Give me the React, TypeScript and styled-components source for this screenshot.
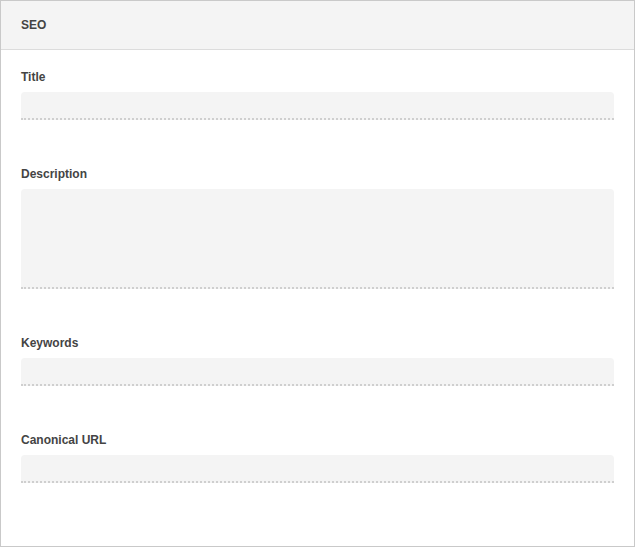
import React from 'react';
import styled, { createGlobalStyle } from 'styled-components';

const GlobalStyle = createGlobalStyle`
  html, body {
    margin: 0;
    padding: 0;
    background: #fff;
  }
  body {
    font-family: "Liberation Sans", Arial, Helvetica, sans-serif;
  }
`;

const Panel = styled.section`
  width: 635px;
  height: 547px;
  box-sizing: border-box;
  border: 1px solid #c9c9c9;
  background: #fff;
  display: flex;
  flex-direction: column;
`;

const PanelHeader = styled.header`
  height: 48px;
  line-height: 48px;
  padding: 0 20px;
  background: #f4f4f4;
  border-bottom: 1px solid #dcdcdc;
  font-size: 12px;
  font-weight: bold;
  color: #444;
`;

const PanelBody = styled.div`
  padding: 20px 20px 16px;
  display: flex;
  flex-direction: column;
  gap: 47px;
`;

const Field = styled.div`
  display: flex;
  flex-direction: column;
`;

const Label = styled.label`
  display: block;
  font-size: 12px;
  line-height: 14px;
  font-weight: bold;
  color: #444;
  margin-bottom: 8px;
`;

const inputBase = `
  box-sizing: border-box;
  width: 100%;
  margin: 0;
  border: none;
  border-bottom: 2px dotted #cfcfcf;
  border-radius: 4px 4px 0 0;
  background: #f4f4f4;
  font-family: "Liberation Sans", Arial, sans-serif;
  font-size: 13px;
  color: #333;
  padding: 0 10px;
  outline: none;
`;

const TextInput = styled.input`
  ${inputBase}
  height: 28px;
`;

const TextArea = styled.textarea<{ $height: number }>`
  ${inputBase}
  height: ${(p) => p.$height}px;
  padding-top: 6px;
  resize: none;
  display: block;
`;

export default function App() {
  return (
    <>
      <GlobalStyle />
      <Panel>
        <PanelHeader>SEO</PanelHeader>
        <PanelBody>
          <Field>
            <Label>Title</Label>
            <TextInput type="text" />
          </Field>
          <Field>
            <Label>Description</Label>
            <TextArea $height={100} />
          </Field>
          <Field>
            <Label>Keywords</Label>
            <TextInput type="text" />
          </Field>
          <Field>
            <Label>Canonical URL</Label>
            <TextInput type="text" />
          </Field>
        </PanelBody>
      </Panel>
    </>
  );
}
